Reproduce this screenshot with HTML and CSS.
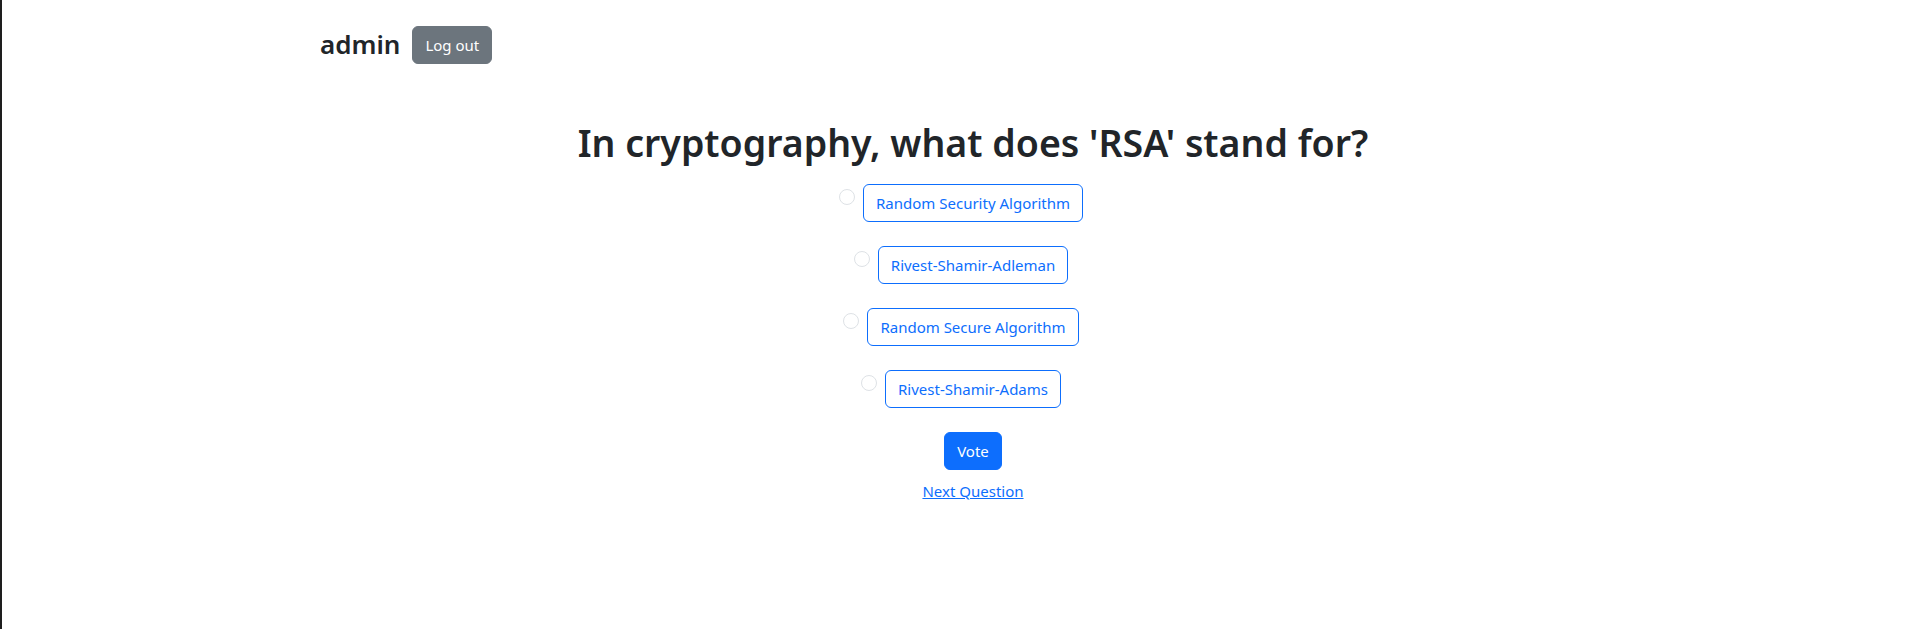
FILE: index.html
```html
<!DOCTYPE html>
<html lang="en">
  <head>
    <meta charset="UTF-8" />
    <meta name="viewport" content="width=device-width, initial-scale=1.0" />
    <title>Poll</title>
    <link rel="stylesheet" href="styles.css">
  </head>
  <body>
    <div class="page">
      <div class="topbar">
        <h3 class="username">admin</h3>
        <button class="btn btn-secondary">Log out</button>
      </div>

      <div class="poll">
        <h1 class="question">In cryptography, what does 'RSA' stand for?</h1>
        <form class="answers">
          <div class="answer">
            <input type="radio" name="choice" id="choice1" />
            <label class="btn btn-outline" for="choice1">Random Security Algorithm</label>
          </div>
          <div class="answer">
            <input type="radio" name="choice" id="choice2" />
            <label class="btn btn-outline" for="choice2">Rivest-Shamir-Adleman</label>
          </div>
          <div class="answer">
            <input type="radio" name="choice" id="choice3" />
            <label class="btn btn-outline" for="choice3">Random Secure Algorithm</label>
          </div>
          <div class="answer">
            <input type="radio" name="choice" id="choice4" />
            <label class="btn btn-outline" for="choice4">Rivest-Shamir-Adams</label>
          </div>
          <button type="button" class="btn btn-primary">Vote</button>
        </form>
        <a class="next" href="#">Next Question</a>
      </div>
    </div>
  </body>
</html>
```

FILE: styles.css
```css
html {
  border-left: 2px solid #1e1e1e;
  min-height: 100%;
}

body {
  margin: 0;
  font-family: "Noto Sans", "Open Sans", sans-serif;
  font-size: 15px;
  line-height: 1.5;
  color: #212529;
  background-color: #fff;
}

.page {
  padding-left: 24px;
}

.topbar {
  display: flex;
  align-items: center;
  gap: 12px;
  padding: 26px 0 0 294px;
}

.username {
  margin: 0;
  font-size: 26px;
  font-weight: 600;
  line-height: 1.2;
}

.btn {
  display: inline-block;
  padding: 6px 12px;
  font-family: inherit;
  font-size: 15px;
  line-height: 24px;
  border: 1px solid transparent;
  border-radius: 6px;
  background-color: transparent;
  cursor: pointer;
}

.btn-secondary {
  background-color: #6c757d;
  border-color: #6c757d;
  color: #fff;
}

.btn-primary {
  background-color: #0d6efd;
  border-color: #0d6efd;
  color: #fff;
}

.btn-outline {
  border-color: #0d6efd;
  color: #0d6efd;
}

.poll {
  text-align: center;
}

.question {
  margin: 56px 0 19px;
  font-size: 37.5px;
  font-weight: 600;
  line-height: 1.2;
}

.answers {
  display: flex;
  flex-direction: column;
  align-items: center;
  gap: 24px;
}

.answer {
  display: flex;
  align-items: flex-start;
}

.answer input {
  appearance: none;
  width: 16px;
  height: 16px;
  margin: 5px 8px 0 -24px;
  border: 1px solid #dee2e6;
  border-radius: 50%;
  background-color: #fff;
}

.next {
  display: inline-block;
  margin-top: 10px;
  color: #0d6efd;
}
```
